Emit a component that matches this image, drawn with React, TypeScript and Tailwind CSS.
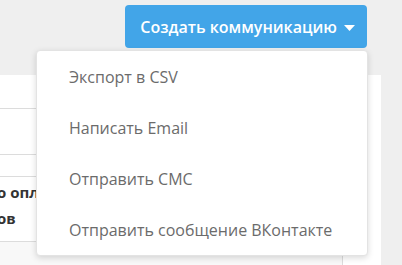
const items = ['Экспорт в CSV', 'Написать Email', 'Отправить СМС', 'Отправить сообщение ВКонтакте']

export default function App() {
  return (
    <div className="relative h-[265px] w-[402px] overflow-hidden bg-[#efefef] font-['Open_Sans',sans-serif]">
      {/* Top bar */}
      <div className="flex h-[75px] items-start justify-end pr-[35px] pt-[5px]">
        <button className="flex h-[43px] items-center gap-[7px] rounded-[4px] bg-[#42a5e8] pl-[15px] pr-[12px] text-[16px] font-semibold text-white">
          Создать коммуникацию
          <svg width="11" height="6" viewBox="0 0 11 6" className="mt-[2px]">
            <path d="M0 0h11L5.5 6z" fill="white" />
          </svg>
        </button>
      </div>

      {/* Page panel */}
      <div className="flex h-[190px] w-[381px] bg-white">
        <div className="flex w-[343px] flex-col">
          <div className="h-[34px] border-b border-[#dcdcdc]" />
          <div className="h-[46px] border-b border-[#dcdcdc]" />
          <div className="h-[22px] border-b border-[#dcdcdc]" />
          <div className="flex h-[65px] flex-col justify-center border-b border-[#dcdcdc] pb-[8px] text-[15px] leading-[26px] font-bold whitespace-nowrap text-[#333]">
            <span className="-ml-[3px]">о оплаченных</span>
            <span className="-ml-[3px]">ов</span>
          </div>
          <div className="flex-1 border-r border-[#dcdcdc] bg-[#f8f8f8]" />
        </div>
      </div>

      {/* Dropdown menu */}
      <div className="absolute top-[50px] left-[36px] w-[332px] rounded-[4px] border border-[#e3e3e3] bg-white shadow-[0_2px_6px_rgba(0,0,0,0.15)]">
        {items.map((label) => (
          <div key={label} className="flex h-[51px] items-center pl-[32px] text-[16px] text-[#6b6b6b]">
            {label}
          </div>
        ))}
      </div>
    </div>
  )
}
